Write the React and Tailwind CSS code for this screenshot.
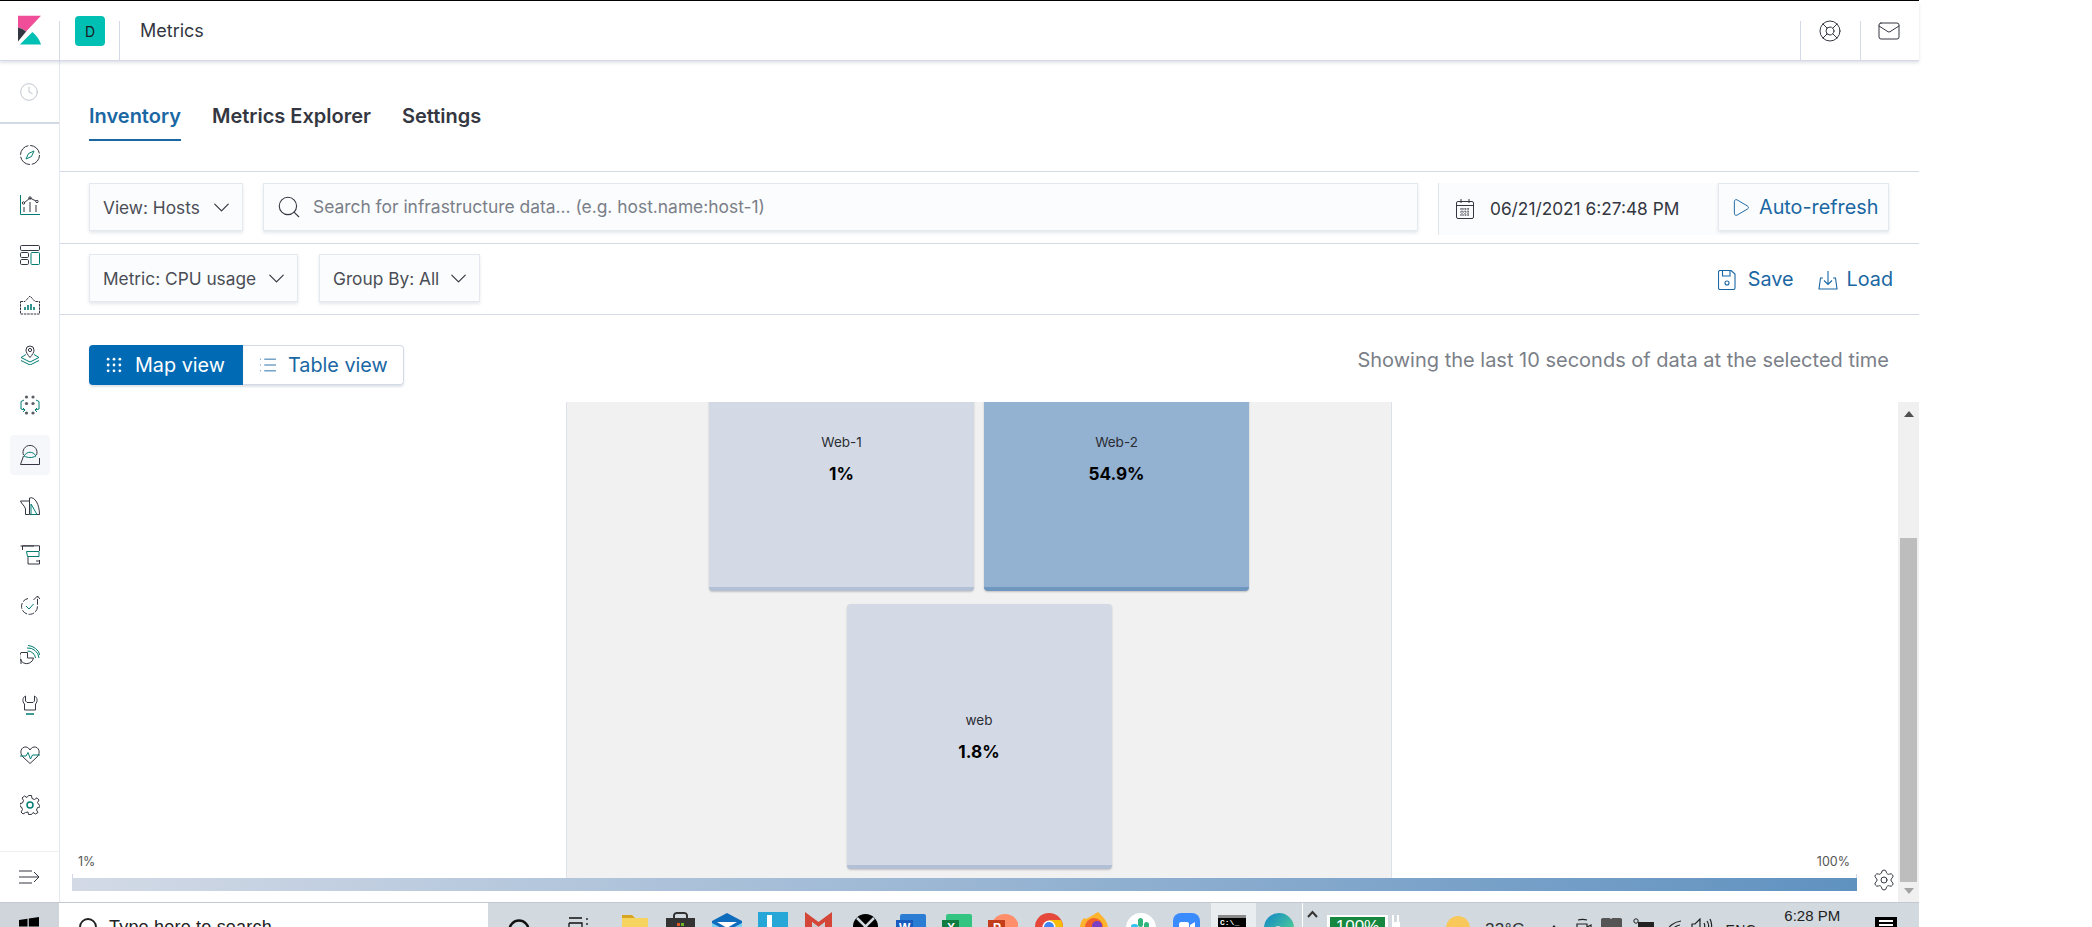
import React from 'react';
import { ChevronDown, Search, Play, List, Settings, LifeBuoy, Mail, Clock } from 'lucide-react';

const D = '#343741';
const T = '#017d73';

function NavIcon({ children }) {
  return (
    <svg width="20" height="20" viewBox="0 0 20 20" fill="none" stroke={D} strokeWidth="1">
      {children}
    </svg>
  );
}

const navIcons = [
  <NavIcon key="discover">
    <circle cx="10" cy="10" r="9.5" strokeDasharray="13 1.9" />
    <path d="M14 6L11.5 11.5L6 14L8.5 8.5Z" stroke={T} />
  </NavIcon>,
  <NavIcon key="visualize">
    <path d="M.5 0V19.5H20" stroke={T} />
    <path d="M4 8L10 3L16 6" />
    <circle cx="3.5" cy="8" r="1.2" />
    <circle cx="10" cy="3" r="1.2" />
    <circle cx="17" cy="6.5" r="1.2" />
    <path d="M4 12V17M10 7V17M16 10V17" />
  </NavIcon>,
  <NavIcon key="dashboard">
    <rect x=".5" y=".5" width="19" height="5" rx="1.2" />
    <rect x=".5" y="7.5" width="8" height="5" rx="1.2" />
    <rect x=".5" y="14.5" width="8" height="5" rx="1.2" />
    <rect x="11" y="7.5" width="8.5" height="12" rx="1" stroke={T} />
  </NavIcon>,
  <NavIcon key="canvas">
    <path d="M.5 6.5H5L10 1L15 6.5H19.5V19H.5Z" strokeDasharray="2.5 .8" />
    <path d="M5 15V12M8 15V10M11 15V9M14 15V12" stroke={T} strokeWidth="1.6" />
  </NavIcon>,
  <NavIcon key="maps">
    <path d="M10 12.5C7.5 9.5 6 7.5 6 5A4 4 0 0 1 14 5C14 7.5 12.5 9.5 10 12.5Z" />
    <circle cx="10" cy="5" r="1.6" />
    <path d="M6 9.5L1 12.5L10 17L19 12.5L14 9.5M1 15.5L10 20L19 15.5" stroke={T} />
  </NavIcon>,
  <NavIcon key="ml">
    <g fill="#5a5d66" stroke="none">
      <circle cx="6.5" cy="2" r="1.6" />
      <circle cx="13" cy="2" r="1.6" />
      <circle cx="6.5" cy="8.5" r="1.6" />
      <circle cx="13" cy="8.5" r="1.6" />
      <circle cx="6.5" cy="18" r="1.6" />
      <circle cx="13" cy="18" r="1.6" />
    </g>
    <path d="M4 5L1 6.5V14L5 15M3 13L5 15L3 17M16 5L19 6.5V14L15 15M17 13L15 15L17 17" stroke={T} />
  </NavIcon>,
  <NavIcon key="metrics">
    <path d="M3.5 10A7 7 0 1 1 16.5 10" />
    <path d="M3.5 11L.5 19.5H19.5V13" />
    <path d="M4 11C7 6 13 6 16 11C12 13 8 13 4 11Z" stroke={T} />
  </NavIcon>,
  <NavIcon key="logs">
    <path d="M9 6H.5C1.5 9 5 11 5.5 14V19.5H9" />
    <path d="M9.500 3C15 1 19.5 10 19.5 19.5H9.5Z" />
    <path d="M11 9L17 19.5H11Z" stroke={T} />
  </NavIcon>,
  <NavIcon key="apm">
    <path d="M2.5 5V.8H19.5V6" />
    <path d="M.5 1H14" />
    <path d="M6.5 6.5H19V11.5H7.5Z" stroke={T} />
    <path d="M8 12V19H19.5V15M16 16H19" />
  </NavIcon>,
  <NavIcon key="uptime">
    <path d="M8 3.5A8 8 0 1 0 17.5 11V1" strokeDasharray="6 1.5" />
    <path d="M13.5 5L17.5 1L20 4" />
    <path d="M6 11L9 14L13.5 9" stroke={T} />
  </NavIcon>,
  <NavIcon key="siem">
    <path d="M7.5 7.5H1A7 7 0 1 0 13.5 13H7.5Z" />
    <path d="M1 14V19" />
    <path d="M7 3A11 11 0 0 1 19 13M7.5 6A8 8 0 0 1 15.5 13M8 .5A13.5 13.5 0 0 1 20 10" stroke={T} />
  </NavIcon>,
  <NavIcon key="dev">
    <path d="M5.500 1C2.5 2.500 2 6.500 4.500 9V15H15.500V9C18 6.500 17.500 2.500 14.500 1V6L13 7.500H7L5.500 6Z" />
    <path d="M6 19H14" stroke={T} strokeWidth="1.5" />
  </NavIcon>,
  <NavIcon key="monitoring">
    <path d="M3 12C-1 8 1 1.5 6 2C8 2.2 9 3.5 10 5C11 3.5 12 2.2 14 2C19 1.5 21 8 17 12L10 18.5Z" />
    <path d="M0 11H6L8 7.5L10.5 14L12.5 10H20" stroke={T} />
  </NavIcon>,
  <NavIcon key="management">
    <path d="M8.5 .5H11.5L12 3.5L14.5 4.5L17 2.8L19 5L17.5 7.5L18.5 9.5L20 10.5V12L17.5 12.5L16.5 15L18 17.5L15.5 19L13 17.5L11.5 19.5H8.5L8 17L5.5 17.5L3 19L1 17L2.5 14.5L1.5 12L0 11.5V8.5L2.5 8L3.5 5.5L2 3L4.5 1L7 2.5Z" />
    <circle cx="10" cy="10" r="3" stroke={T} strokeWidth="1.5" />
  </NavIcon>,
];

function SelectBox({ label, className }) {
  return (
    <div className={`flex items-center justify-between h-[48px] pl-[13px] pr-[7px] bg-[#fbfcfd] border border-[#e4e8ef] shadow-[0_2px_3px_rgba(152,162,179,0.25)] text-[17.3px] text-[#4a4d55] ${className}`}>
      <span className="pt-[1px]">{label}</span>
      <ChevronDown size={27} strokeWidth={1.05} color="#343741" />
    </div>
  );
}

function Taskbar() {
  return (
    <div className="flex h-[25px] w-full shrink-0 overflow-hidden bg-[#d2d9df] border-t border-[#c3c9ce] [font-family:'Liberation_Sans',sans-serif]">
      <div className="w-[59px] h-full shrink-0 bg-[#cfd5da] pl-[19px] pt-[14px]">
        <svg width="20" height="20" viewBox="0 0 20 20" fill="#000"><path d="M0 3L8.5 1.8V9.5H0ZM9.8 1.6L20 0V9.5H9.8Z" /></svg>
      </div>
      <div className="w-[429px] h-full shrink-0 bg-white flex pl-[19px] pt-[14px] text-[#222]">
        <svg width="22" height="22" viewBox="0 0 22 22" fill="none" stroke="#222" strokeWidth="1.8"><circle cx="10" cy="10" r="8" /></svg>
        <span className="ml-[9px] text-[18px] leading-[20px] tracking-[0.2px]">Type here to search</span>
      </div>

      <svg className="ml-[20px] mt-[15px] shrink-0" width="22" height="24" fill="none" stroke="#111" strokeWidth="2.5"><circle cx="11" cy="12" r="9.5" /></svg>
      <svg className="ml-[38px] mt-[14px] shrink-0" width="22" height="20" fill="none" stroke="#111" strokeWidth="1.3"><path d="M1 1H14M1 6H14V20M1 6V20M19 1V3M19 6V8" /></svg>
      <svg className="ml-[32px] mt-[12px] shrink-0" width="26" height="22"><path d="M0 0H10L13 3H26V22H0Z" fill="#f7d35f" /><path d="M0 0H10L13 3H0Z" fill="#d8a520" /></svg>
      <svg className="ml-[18px] mt-[9px] shrink-0" width="29" height="24" fill="none"><path d="M8 6V3A3 3 0 0 1 11 1H18A3 3 0 0 1 21 3V6" stroke="#333" strokeWidth="2" /><rect y="6" width="29" height="18" fill="#333" /><rect x="11" y="11" width="3" height="3" fill="#e25a2c" /><rect x="15" y="11" width="3" height="3" fill="#6fb52c" /></svg>
      <svg className="ml-[17px] mt-[10px] shrink-0" width="30" height="24"><path d="M0 8L15 0L30 8V24H0Z" fill="#0f6cbd" /><path d="M0 10L15 18L30 10V24H0Z" fill="#7cd0f0" /><path d="M5 9H25L15 15Z" fill="#fff" /></svg>
      <svg className="ml-[16px] mt-[9px] shrink-0" width="30" height="24"><rect width="30" height="24" fill="#27a7d8" /><rect x="9" y="3" width="5" height="21" fill="#fff" /></svg>
      <svg className="ml-[17px] mt-[9px] shrink-0" width="27" height="24"><path d="M0 0L13.5 10L27 0V24H20V10L13.5 15L7 10V24H0Z" fill="#d44638" /><path d="M7 10L13.5 15L20 10V24H7Z" fill="#c9ced2" /></svg>
      <svg className="ml-[21px] mt-[11px] shrink-0" width="25" height="25"><circle cx="12.5" cy="12.5" r="12.5" fill="#000" /><path d="M4 4L21 21M21 4L4 21" stroke="#d2d9df" strokeWidth="2.5" /></svg>
      <svg className="ml-[18px] mt-[11px] shrink-0" width="30" height="24"><rect x="4" width="26" height="24" rx="2" fill="#2b7cd3" /><rect y="6" width="17" height="18" fill="#185abd" /><text x="3" y="18" fontSize="12" fontWeight="700" fill="#fff">W</text></svg>
      <svg className="ml-[16px] mt-[11px] shrink-0" width="30" height="24"><rect x="4" width="26" height="24" rx="2" fill="#33c481" /><rect y="6" width="17" height="18" fill="#107c41" /><text x="5" y="18" fontSize="12" fontWeight="700" fill="#fff">X</text></svg>
      <svg className="ml-[16px] mt-[11px] shrink-0" width="30" height="24"><circle cx="17" cy="14" r="14" fill="#ff8f6b" /><rect y="6" width="17" height="18" fill="#c43e1c" /><text x="5" y="18" fontSize="12" fontWeight="700" fill="#fff">P</text></svg>
      <svg className="ml-[17px] mt-[10px] shrink-0" width="28" height="28"><circle cx="14" cy="14" r="14" fill="#e5483b" /><path d="M14 14L2 21A14 14 0 0 0 14 28Z" fill="#34a853" /><path d="M14 14V28A14 14 0 0 0 26 7H14Z" fill="#fbbc05" /><circle cx="14" cy="14" r="6.5" fill="#fff" /><circle cx="14" cy="14" r="5" fill="#4285f4" /></svg>
      <svg className="ml-[17px] mt-[9px] shrink-0" width="28" height="28"><path d="M18 0C24 6 28 10 28 16A14 12 0 0 1 0 16C0 11 2 8 4 6C6 8 8 6 18 0Z" fill="#ffb42e" /><circle cx="14" cy="15" r="9" fill="#f2612a" /><circle cx="17" cy="14" r="5" fill="#7b3fc4" /></svg>
      <svg className="ml-[18px] mt-[10px] shrink-0" width="30" height="30"><circle cx="15" cy="15" r="15" fill="#fff" /><rect x="12" y="5" width="5" height="9" rx="2.5" fill="#2eb67d" /><rect x="5" y="11" width="7" height="5" rx="2.5" fill="#36c5f0" /><rect x="18" y="9" width="5" height="8" rx="2.5" fill="#2eb67d" /></svg>
      <svg className="ml-[17px] mt-[10px] shrink-0" width="27" height="27"><rect width="27" height="27" rx="8" fill="#3a8bfd" /><rect x="6" y="9" width="10" height="9" rx="2" fill="#fff" /><path d="M17 12L22 9V18L17 15Z" fill="#fff" /></svg>
      <div className="ml-[11px] w-[45px] shrink-0 h-full bg-[#e9edf0] pl-[7px] pt-[12px]">
        <div className="w-[28px] h-[20px] bg-black border-t-[3px] border-[#8a8a8a] text-white text-[8px] leading-[10px] font-bold pl-[2px] [font-family:'Liberation_Mono',monospace]">C:\_</div>
      </div>
      <svg className="ml-[8px] mt-[10px] shrink-0" width="30" height="30"><defs><linearGradient id="edge" x1="0" y1="0" x2="1" y2="1"><stop offset="0" stopColor="#1185c9" /><stop offset="1" stopColor="#5fe08a" /></linearGradient></defs><circle cx="15" cy="15" r="15" fill="url(#edge)" /><circle cx="14" cy="18" r="5" fill="#d2d9df" /></svg>

      <div className="ml-[8px] w-[1px] shrink-0 h-full bg-white" />
      <svg className="ml-[4px] mt-[7px] shrink-0" width="11" height="8" fill="none" stroke="#333" strokeWidth="2"><path d="M1 7L5.5 2L10 7" /></svg>
      <div className="ml-[9px] mt-[12px] w-[61px] h-[20px] shrink-0 bg-white pt-[2px] px-[3px]">
        <div className="h-full bg-[#15873f] text-white text-center text-[17px] leading-[20px]">100%</div>
      </div>
      <svg className="ml-[4px] mt-[12px] shrink-0" width="9" height="14" fill="#fff"><rect width="2" height="8" /><rect x="5" width="2" height="8" /><rect y="7" width="8" height="6" /></svg>
      <svg className="ml-[45px] mt-[13px] shrink-0" width="24" height="24"><circle cx="12" cy="12" r="12" fill="#f8c85a" /><circle cx="18" cy="18" r="6" fill="#cfe2ee" /></svg>
      <span className="ml-[15px] mt-[17px] shrink-0 text-[17px] leading-[20px] text-[#333] tracking-[0.4px]">22°C</span>
      <svg className="ml-[24px] mt-[22px] shrink-0" width="10" height="7" fill="none" stroke="#222" strokeWidth="1.3"><path d="M1 6L5 1L9 6" /></svg>
      <svg className="ml-[17px] mt-[15px] shrink-0" width="16" height="14" fill="none" stroke="#222" strokeWidth="1.2"><path d="M1 6H11V14H1ZM2 2A8 3 0 0 1 11 2M11 9L15 7V14" /></svg>
      <svg className="ml-[9px] mt-[15px] shrink-0" width="21" height="14" fill="#555"><path d="M0 14A7 7 0 0 1 10 1A7 7 0 0 1 21 14Z" /></svg>
      <svg className="ml-[11px] mt-[15px] shrink-0" width="21" height="14" fill="#222"><rect x="5" y="4" width="16" height="10" /><circle cx="3" cy="3" r="2.2" fill="none" stroke="#222" /></svg>
      <svg className="ml-[12px] mt-[17px] shrink-0" width="16" height="12" fill="none" stroke="#222" strokeWidth="1.2"><path d="M1 12C2 7 7 2 15 1M6 12C6.5 9 9 6 14 5" /></svg>
      <svg className="ml-[9px] mt-[15px] shrink-0" width="22" height="14" fill="none" stroke="#222" strokeWidth="1.2"><path d="M1 6H4L9 1V14L4 10H1ZM13 5C14 7 14 9 13 11M16 3C18 6 18 10 16 13M19 1C21 5 21 10 19 14" /></svg>
      <span className="ml-[13px] mt-[17px] shrink-0 text-[14px] leading-[20px] text-[#222] tracking-[0.4px]">ENC</span>
      <span className="ml-[28px] mt-[3px] shrink-0 text-[15px] leading-[20px] text-[#222]">6:28 PM</span>
      <div className="ml-[35px] mt-[14px] w-[22px] h-[20px] shrink-0 bg-black pt-[3px] px-[4px]">
        <div className="h-[2px] bg-white mb-[2px]" />
        <div className="h-[2px] bg-white mb-[2px]" />
        <div className="h-[2px] bg-white" />
      </div>
      <div className="ml-[23px] w-[1px] shrink-0 h-full bg-[#a9afb4]" />
    </div>
  );
}

function MapCard({ name, value, className }) {
  return (
    <div className={`w-[265px] h-[265px] shrink-0 rounded-[4px] border-b-[4px] flex flex-col items-center pt-[107px] shadow-[0_1px_2px_rgba(0,0,0,0.2)] ${className}`}>
      <div className="text-[13.5px] leading-[18px] text-[#2b2d33]">{name}</div>
      <div className="mt-[11px] text-[17.2px] leading-[24px] font-bold text-black">{value}</div>
    </div>
  );
}

export default function App() {
  return (
    <div className="w-[2092px] h-[927px] overflow-hidden bg-white [font-family:Inter,sans-serif]">
      <div className="w-[1919px] h-full flex flex-col">
        <div className="h-px bg-black shrink-0" />

        <header className="relative z-10 h-[60px] shrink-0 flex bg-white border-b border-[#d3dae6] shadow-[0_2px_3px_rgba(152,162,179,0.3)]">
          <div className="w-[59px] shrink-0 pl-[18px] pt-[14px]">
            <svg width="23" height="30" viewBox="0 0 24 30">
              <path d="M0 0H24L8.5 16.5C5.8 14.3 3 13 0 12.3Z" fill="#f04e98" />
              <path d="M0 12.3C3.2 13 6 14.4 8.5 16.5L0 27Z" fill="#343741" />
              <path d="M2 30H24C22.5 25 19.5 20.5 15 17Z" fill="#00bfb3" />
            </svg>
          </div>
          <div className="h-[40px] mt-[20px] border-l border-[#d3dae6]" />
          <div className="mt-[15px] ml-[15px] w-[30px] h-[30px] rounded-[4px] bg-[#00bfb3] flex items-center justify-center text-[14px] text-[#1a1c21]">D</div>
          <div className="h-[40px] mt-[20px] ml-[14px] border-l border-[#d3dae6]" />
          <div className="ml-[20px] mt-[19px] text-[18px] leading-[22px] text-[#343741]">Metrics</div>
          <div className="ml-auto flex">
            <div className="h-[40px] mt-[20px] w-[60px] border-l border-[#d3dae6] flex justify-center">
              <LifeBuoy className="-mt-[2px] -ml-[2px]" size={24} strokeWidth={1} color="#343741" />
            </div>
            <div className="h-[40px] mt-[20px] w-[59px] border-l border-[#d3dae6] flex justify-center">
              <Mail className="-mt-[2px] -ml-[2px]" size={24} strokeWidth={1} color="#343741" />
            </div>
          </div>
        </header>

        <div className="flex-1 min-h-0 flex">
          <aside className="w-[60px] shrink-0 flex flex-col border-r border-[#e3e7ee]">
            <div className="h-[63px] shrink-0 flex items-center justify-center border-b-2 border-[#d3dae6]">
              <Clock size={20} strokeWidth={1} color="#b4bac4" className="-ml-[1px]" />
            </div>
            <div className="flex-1 pt-[6px] flex flex-col items-center">
              {navIcons.map((icon, i) => (
                <div key={i} className={`w-[40px] h-[40px] my-[5px] shrink-0 flex items-center justify-center rounded-[4px] ${i === 6 ? 'bg-[#f5f7fa]' : ''}`}>
                  {icon}
                </div>
              ))}
            </div>
            <div className="h-[51px] shrink-0 border-t border-[#eef0f4] flex items-center justify-center">
              <svg width="21" height="14" viewBox="0 0 21 14" fill="none" stroke={D} strokeWidth="1">
                <path d="M0 1H13M0 7H20M0 13H13M15 2L20 7L15 12" />
              </svg>
            </div>
          </aside>

          <main className="flex-1 min-w-0 flex flex-col">
            <nav className="h-[111px] shrink-0 pl-[29px] flex gap-[31px] text-[20px] font-semibold text-[#343741] border-b border-[#d3dae6]">
              <div className="h-[80px] flex items-end pb-[8px] text-[#1a67a3] border-b-[2px] border-[#1a67a3]">Inventory</div>
              <div className="h-[80px] flex items-end pb-[10px]">Metrics Explorer</div>
              <div className="h-[80px] flex items-end pb-[10px]">Settings</div>
            </nav>

            <div className="h-[72px] shrink-0 pl-[29px] pr-[30px] pt-[11px] flex border-b border-[#d3dae6]">
              <SelectBox label="View: Hosts" className="w-[154px]" />
              <div className="ml-[20px] w-[1155px] h-[48px] flex items-center pl-[12px] bg-[#fbfcfd] border border-[#e4e8ef] shadow-[0_2px_3px_rgba(152,162,179,0.25)]">
                <Search size={26} strokeWidth={1} color="#343741" />
                <span className="ml-[11px] text-[17.4px] text-[#7a7f89]">Search for infrastructure data... (e.g. host.name:host-1)</span>
              </div>
              <div className="ml-[20px] w-[280px] h-[52px] flex items-center pl-[17px] bg-[#fbfcfd] border-l border-[#dfe3ea]">
                <svg width="18" height="20" viewBox="0 0 18 20" fill="none" stroke="#343741" strokeWidth="1">
                  <rect x=".5" y="2.5" width="17" height="17" rx="1.5" />
                  <path d="M.5 6.5H17.5M5 0V4M13 0V4" />
                  <path d="M4 10H14M4 13H14M4 16H14M6 9V17M9 9V17M12 9V17" strokeWidth=".9" strokeDasharray="1.5 1" />
                </svg>
                <span className="ml-[16px] text-[17.3px] text-[#343741]">06/21/2021 6:27:48 PM</span>
              </div>
              <div className="w-[171px] h-[48px] flex items-center pl-[11px] bg-[#fbfcfd] border border-[#e4e8ef] shadow-[0_2px_3px_rgba(152,162,179,0.25)] text-[19.8px] text-[#1a67a3]">
                <Play size={21} strokeWidth={1.1} />
                <span className="ml-[8px] pt-[1px]">Auto-refresh</span>
              </div>
            </div>

            <div className="h-[71px] shrink-0 pl-[29px] pr-[26px] pt-[10px] flex border-b border-[#d3dae6]">
              <SelectBox label="Metric: CPU usage" className="w-[209px]" />
              <SelectBox label="Group By: All" className="ml-[21px] w-[161px]" />
              <div className="ml-auto h-[52px] flex items-center text-[19.8px] text-[#1a67a3]">
                <svg width="18" height="20" viewBox="0 0 18 20" fill="none" stroke="currentColor" strokeWidth="1.1">
                  <path d="M1.5 .5H13L17 4V18A1.5 1.5 0 0 1 15.5 19.5H2A1.5 1.5 0 0 1 .5 18V1.5Z" />
                  <path d="M4.5 1V6H12V1" />
                  <circle cx="9" cy="13" r="2" />
                </svg>
                <span className="ml-[12px]">Save</span>
                <svg className="ml-[24px]" width="20" height="20" viewBox="0 0 20 20" fill="none" stroke="currentColor" strokeWidth="1.1">
                  <path d="M5 8H2.5L1 19H19L17.5 8H15" />
                  <path d="M10 1V14M6 10.5L10 14.5L14 10.5" />
                </svg>
                <span className="ml-[9px]">Load</span>
              </div>
            </div>

            <div className="h-[87px] shrink-0 pl-[29px] pr-[30px] pt-[30px] flex">
              <div className="w-[154px] h-[40px] rounded-l-[4px] bg-[#006bb4] text-white flex items-center pl-[17px] text-[19.8px] shadow-[0_2px_2px_rgba(152,162,179,0.3)]">
                <svg width="16" height="16" viewBox="0 0 15 15" fill="currentColor">
                  <circle cx="2" cy="2" r="1.3" /><circle cx="7.5" cy="2" r="1.3" /><circle cx="13" cy="2" r="1.3" />
                  <circle cx="2" cy="7.5" r="1.3" /><circle cx="7.5" cy="7.5" r="1.3" /><circle cx="13" cy="7.5" r="1.3" />
                  <circle cx="2" cy="13" r="1.3" /><circle cx="7.5" cy="13" r="1.3" /><circle cx="13" cy="13" r="1.3" />
                </svg>
                <span className="ml-[13px] pt-[1px]">Map view</span>
              </div>
              <div className="w-[161px] h-[40px] rounded-r-[4px] border border-l-0 border-[#d3dae6] flex items-center pl-[15px] text-[19.8px] text-[#1a67a3] shadow-[0_2px_2px_rgba(152,162,179,0.3)]">
                <List size={20} strokeWidth={1.1} />
                <span className="ml-[10px] pt-[1px]">Table view</span>
              </div>
              <div className="ml-auto -mt-[3px] h-[36px] leading-[36px] text-[20px] text-[#7b7f88]">Showing the last 10 seconds of data at the selected time</div>
            </div>

            <div className="flex-1 min-h-0 flex">
              <div className="relative flex-1 min-w-0 flex flex-col">
                <div className="h-[476px] shrink-0 flex justify-center overflow-hidden">
                  <div className="w-[826px] h-full bg-[#f1f1f1] border-x border-[#dde1e9] flex flex-col items-center">
                    <div className="-mt-[76px] flex gap-[10px]">
                      <MapCard name="Web-1" value="1%" className="bg-[#d3dae6] border-[#b3bfd4]" />
                      <MapCard name="Web-2" value="54.9%" className="bg-[#93b1d1] border-[#6f96bf]" />
                    </div>
                    <div className="mt-[13px]">
                      <MapCard name="web" value="1.8%" className="bg-[#d3dae6] border-[#b3bfd4]" />
                    </div>
                  </div>
                </div>
                <div className="relative ml-[12px] w-[1785px] h-[13px] bg-gradient-to-r from-[#d3dae6] to-[#6092c0]">
                  <span className="absolute left-[6px] -top-[25px] text-[12.5px] leading-[18px] text-[#555]">1%</span>
                  <span className="absolute right-[7px] -top-[25px] text-[12.5px] leading-[18px] text-[#555]">100%</span>
                  <div className="absolute left-0 -top-[4px] h-[4px] border-l border-[#d3dae6]" />
                  <div className="absolute right-0 -top-[4px] h-[4px] border-l border-[#d3dae6]" />
                </div>
                <Settings className="absolute left-[1812px] top-[466px]" size={24} strokeWidth={1} color="#343741" />
              </div>

              <div className="w-[21px] shrink-0 bg-[#f0f0f0] flex flex-col items-center">
                <div className="h-[136px] w-full flex justify-center pt-[9px]">
                  <svg width="10" height="6"><path d="M0 6L5 0L10 6Z" fill="#505050" /></svg>
                </div>
                <div className="w-[17px] h-[344px] bg-[#bdbdbd]" />
                <div className="h-[20px] w-full flex justify-center pt-[6px]">
                  <svg width="10" height="6"><path d="M0 0H10L5 6Z" fill="#a3a3a3" /></svg>
                </div>
              </div>
            </div>
          </main>
        </div>

        <Taskbar />
      </div>
    </div>
  );
}
